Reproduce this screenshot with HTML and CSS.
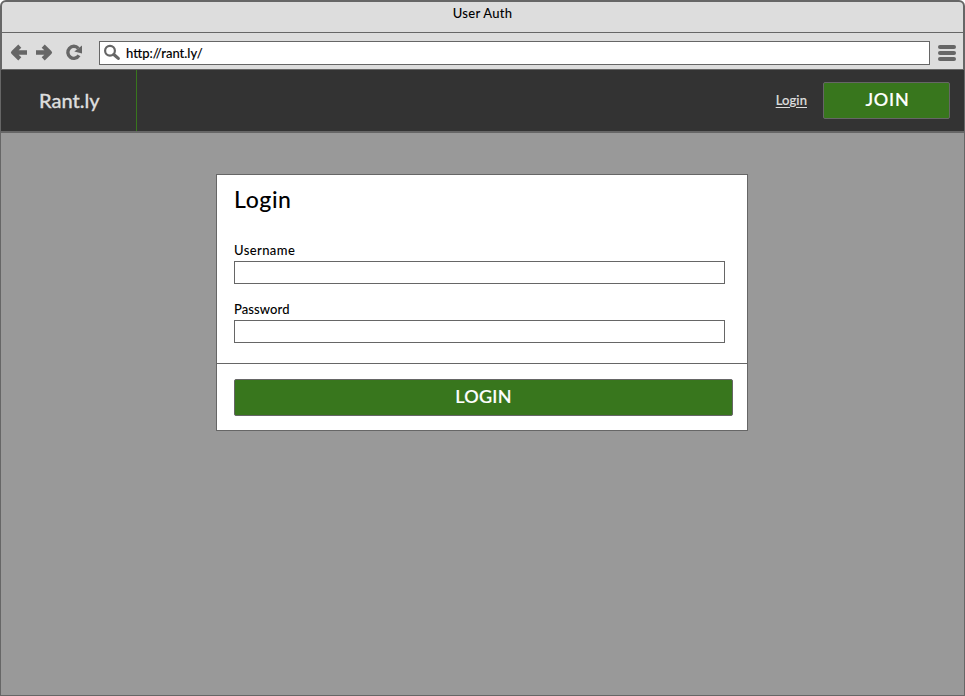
FILE: index.html
```html
<!DOCTYPE html>
<html lang="en">
<head>
<meta charset="utf-8">
<title>User Auth</title>
<link rel="stylesheet" href="styles.css">
</head>
<body>
<div class="window">
  <div class="chrome">
    <div class="titlebar"><span class="title">User Auth</span></div>
    <div class="toolbar">
      <svg class="nav-icons" width="97" height="36" viewBox="0 0 97 36" fill="none" stroke="#666">
        <g stroke-width="4.4">
          <path d="M11 19.5H25M17.8 13.2L11.2 19.5L17.8 25.8" stroke-linejoin="round"/>
          <path d="M34 19.5H48M41.2 13.2L47.8 19.5L41.2 25.8" stroke-linejoin="round"/>
        </g>
        <path d="M76.3 15.3A6 6 0 1 0 77 22.4" stroke-width="3.4"/>
        <path d="M80 12.5V20.5L72.3 18.4Z" fill="#666" stroke="none"/>
      </svg>
      <div class="address">
        <svg width="22" height="22" viewBox="0 0 22 22" fill="none" stroke="#666">
          <circle cx="8" cy="8.8" r="4.9" stroke-width="2.2"/>
          <path d="M11.8 12.5L16.3 16.4" stroke-width="3.2" stroke-linecap="round"/>
        </svg>
        <span class="url">http://rant.ly/</span>
      </div>
      <div class="menu"><i></i><i></i><i></i></div>
    </div>
  </div>
  <div class="page">
    <header class="header">
      <div class="brand"><span>Rant.ly</span></div>
      <nav class="actions">
        <a class="login-link">Login</a>
        <button class="button join"><span>JOIN</span></button>
      </nav>
    </header>
    <main class="content">
      <form class="card">
        <div class="fields">
          <h1>Login</h1>
          <label class="username" for="u">Username</label>
          <input id="u" type="text">
          <label class="password" for="p">Password</label>
          <input id="p" type="password">
        </div>
        <div class="footer">
          <button class="button submit" type="button"><span>LOGIN</span></button>
        </div>
      </form>
    </main>
  </div>
</div>
</body>
</html>
```
FILE: styles.css
```css
* { box-sizing: border-box; }
body { margin: 0; background: #fff; font-family: Lato, "Liberation Sans", sans-serif; font-size: 13px; font-weight: 500; color: #000; }
.window { height: 696px; display: flex; flex-direction: column; }
.chrome { height: 70px; background: #ddd; border: 2px solid #666; border-bottom-width: 1px; border-radius: 6px 6px 0 0; }
.titlebar { height: 31px; border-bottom: 1px solid #666; text-align: center; line-height: 22px; }
.title { letter-spacing: .25px; }
.toolbar { height: 36px; display: flex; align-items: center; }
.nav-icons { flex: none; }
.address { width: 831px; height: 24px; background: #fff; border: 1px solid #666; display: flex; align-items: center; padding-left: 2px; align-self: flex-start; margin-top: 8px; }
.url { margin-left: 2px; -webkit-text-stroke: .1px; }
.menu { display: flex; flex-direction: column; gap: 2px; margin: 4px 0 0 8px; }
.menu i { width: 18px; height: 4px; border-radius: 2px; background: #666; }
.page { flex: 1; background: #999; border: 1px solid #666; border-top: 0; display: flex; flex-direction: column; }
.header { height: 63px; background: #333; border-bottom: 2px solid #666; display: flex; justify-content: space-between; }
.brand { width: 136px; border-right: 1px solid #38761d; padding-left: 38px; line-height: 61px; font-size: 20px; color: #ddd; -webkit-text-stroke: .3px; }
.actions { display: flex; align-items: center; gap: 16px; padding-right: 14px; }
.login-link { color: #ddd; text-decoration: underline; text-underline-offset: 2px; letter-spacing: .1px; padding-bottom: 2px; -webkit-text-stroke: .2px; }
.button { display: block; height: 37px; padding: 0 0 2px; border: 1px solid #666; border-radius: 2px; background: #38761d; color: #fff; font: 500 18px/33px Lato, "Liberation Sans", sans-serif; -webkit-text-stroke: .2px; letter-spacing: .3px; }
.join { width: 127px; padding-left: 2px; letter-spacing: .8px; }
.content { padding: 41px 0 0 215px; }
.card { width: 532px; height: 257px; background: #fff; border: 1px solid #666; }
.fields { height: 189px; padding: 11px 0 0 17px; border-bottom: 1px solid #666; }
h1 { margin: 0 0 29px; font-size: 23px; font-weight: 500; line-height: 26px; letter-spacing: .6px; }
label { display: block; height: 20px; line-height: 19px; }
.username { letter-spacing: .4px; }
.password { letter-spacing: .1px; }
input { display: block; width: 491px; height: 23px; margin: 0 0 16px; padding: 0 4px; border: 1px solid #666; background: #fff; outline: 0; }
.footer { padding: 15px 0 0 17px; }
.submit { width: 499px; }
```
